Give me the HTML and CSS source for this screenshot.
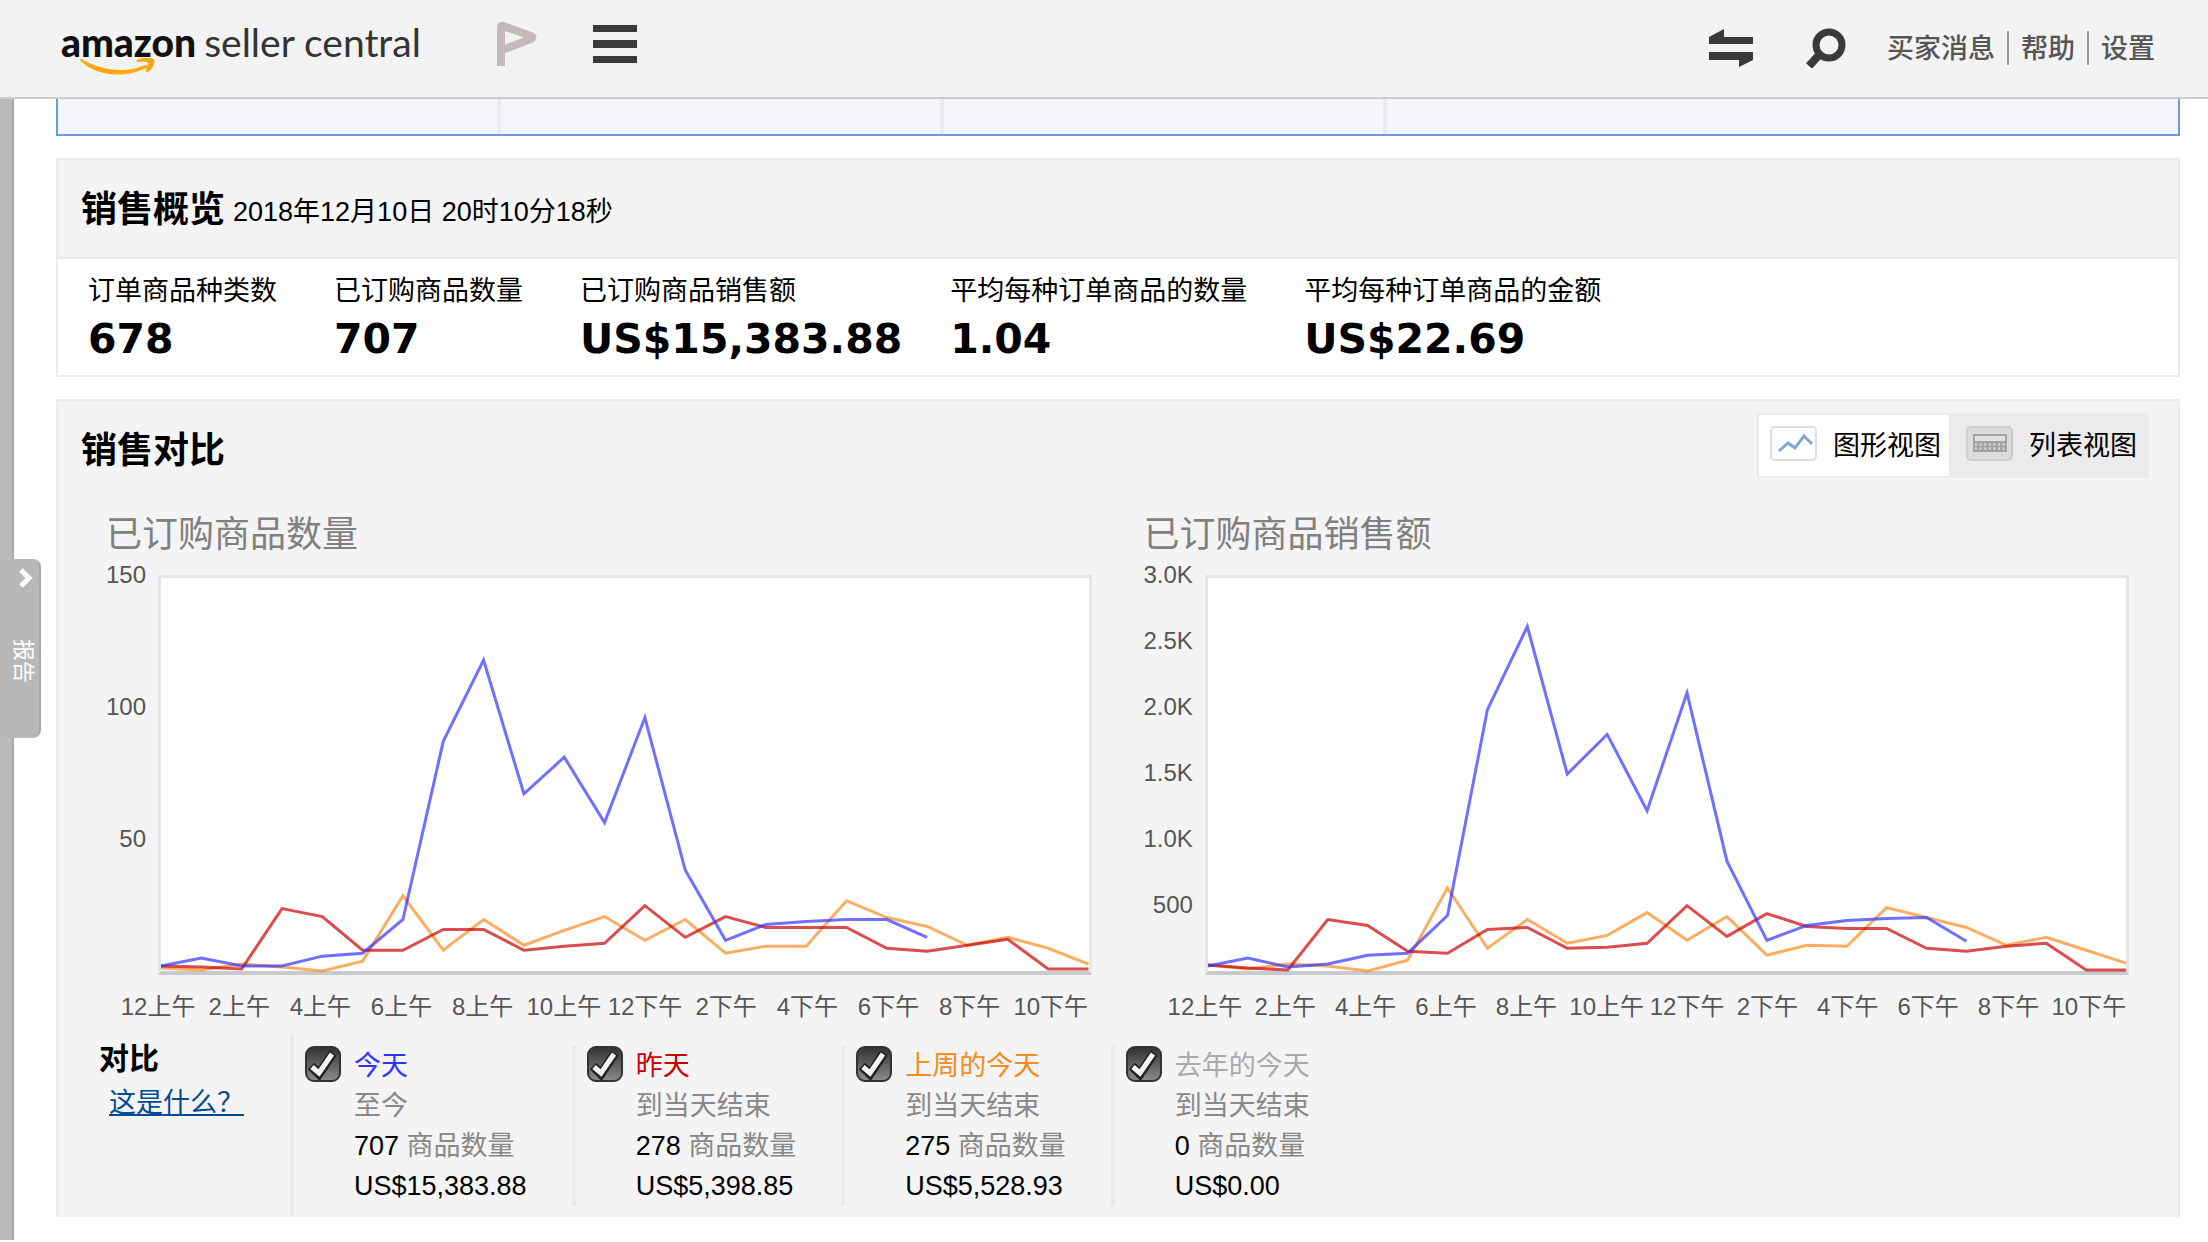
FILE: index.html
```
<!DOCTYPE html>
<html lang="zh-CN">
<head>
  <meta charset="utf-8">
  <title>Amazon Seller Central</title>

  <link rel="stylesheet" href="styles.css">
</head>
<body>

  <header class="topbar">
    <a class="logo" href="#">
      <span class="logo-bold">amazon</span>
      <span class="logo-light">seller central</span>
      <svg class="smile" viewBox="0 0 76 24" preserveAspectRatio="none">
        <path d="M1 1C20 17 46 21 66 9L68 12C46 28 16 25 0 3Z" fill="#ffa60c"/>
        <path d="M57 3C64 -1 70 0 74 2C74 9 72 15 67 19L66 17C68 12 69 8 68 5C65 4 61 4 57 5Z" fill="#ffa60c" stroke="#ffa60c"/>
      </svg>
    </a>
    <button class="icon-btn flag" type="button" aria-label="旗标">
      <svg width="40" height="46" viewBox="0 0 40 46">
        <path d="M4 45V6Q4 4 6 5L34 15Q37 16 34 18L5 29" fill="none" stroke="#c6b9b9" stroke-width="8"/>
      </svg>
    </button>
    <button class="icon-btn" type="button" aria-label="菜单">
      <svg width="44" height="38" viewBox="0 0 44 38">
        <path d="M0 0H44V7H0ZM0 15H44V23H0ZM0 31H44V38H0Z" fill="#3a3a3a"/>
      </svg>
    </button>

    <nav class="top-links">
      <button class="icon-btn" type="button" aria-label="切换">
        <svg width="44" height="38" viewBox="0 0 44 38">
          <path d="M0 8L15 0V8H44V15H0ZM0 23H44V31L30 38V31H0Z" fill="#3a3a3a"/>
        </svg>
      </button>
      <button class="icon-btn search" type="button" aria-label="搜索">
        <svg width="40" height="40" viewBox="0 0 40 40">
          <circle cx="23" cy="17" r="13" fill="none" stroke="#3a3a3a" stroke-width="7"/>
          <path d="M13 27L3 38" stroke="#3a3a3a" stroke-width="8"/>
        </svg>
      </button>
      <a href="#">买家消息</a>
      <a href="#">帮助</a>
      <a href="#">设置</a>
    </nav>
  </header>

  <div class="layout">
    <aside class="rail">
      <button class="rail-tab" type="button">
        <svg width="16" height="20" viewBox="0 0 16 20">
          <path d="M3 2L11 10L3 18" fill="none" stroke="#fff" stroke-width="5"/>
        </svg>
        <span>报告</span>
      </button>
    </aside>

    <main class="content">
      <div class="strip">
        <div></div>
        <div></div>
        <div></div>
        <div></div>
      </div>

      <section class="panel">
        <div class="panel-head">
          <h2>销售概览</h2>
          <span class="date">2018年12月10日 20时10分18秒</span>
        </div>
        <dl class="stats">
          <div><dt>订单商品种类数</dt><dd>678</dd></div>
          <div><dt>已订购商品数量</dt><dd>707</dd></div>
          <div><dt>已订购商品销售额</dt><dd>US$15,383.88</dd></div>
          <div><dt>平均每种订单商品的数量</dt><dd>1.04</dd></div>
          <div><dt>平均每种订单商品的金额</dt><dd>US$22.69</dd></div>
        </dl>
      </section>

      <section class="panel compare">
        <div class="compare-head">
          <h2>销售对比</h2>
          <div class="views">
            <button class="view active" type="button">
              <svg width="47" height="35" viewBox="0 0 47 35">
                <rect x="1" y="1" width="45" height="33" rx="4" fill="#fff" stroke="#dedede" stroke-width="2"/>
                <path d="M9 25L18 17L25 22L34 10L42 18" fill="none" stroke="#7ba9d8" stroke-width="3"/>
              </svg>
              图形视图
            </button>
            <button class="view" type="button">
              <svg width="47" height="35" viewBox="0 0 47 35">
                <rect x="1" y="1" width="45" height="33" rx="4" fill="#dcdcdc" stroke="#cdcdcd" stroke-width="2"/>
                <rect x="7" y="8" width="34" height="18" fill="#a3a3a3"/>
                <rect x="9" y="10" width="30" height="5" fill="#e2e2e2"/>
                <path d="M9 18.500H39M9 22.500H39" stroke="#e2e2e2" stroke-width="2" stroke-dasharray="2 2.600"/>
              </svg>
              列表视图
            </button>
          </div>
        </div>

        <div class="charts">
          <figure class="chart">
            <figcaption>已订购商品数量</figcaption>
            <div class="y-axis">
              <span>150</span><span>100</span><span>50</span><span></span>
            </div>
            <!-- 40 units per hour across, 397 units = full scale -->
            <svg class="plot" viewBox="0 0 920 397" preserveAspectRatio="none">
              <polyline class="line last-week" points="0,394 40,396 80,390 120,393 160,397 200,387 240,321 280,376 320,345 360,371 400,356 440,342 480,366 520,345 560,379 600,372 640,372 680,326 720,343 760,352 800,371 840,363 880,374 920,390"/>
              <polyline class="line yesterday" points="0,392 40,393 80,395 120,334 160,342 200,376 240,376 280,355 320,355 360,376 400,372 440,369 480,331 520,363 560,342 600,353 640,353 680,353 720,374 760,377 800,371 840,365 880,395 920,395"/>
              <polyline class="line today" points="0,392 40,384 80,392 120,392 160,382 200,379 240,345 280,165 320,83 360,218 400,181 440,247 480,141 520,295 560,366 600,350 640,347 680,345 720,345 760,363"/>
            </svg>
            <div class="x-axis">
              <span>12上午</span><span>2上午</span><span>4上午</span><span>6上午</span><span>8上午</span><span>10上午</span><span>12下午</span><span>2下午</span><span>4下午</span><span>6下午</span><span>8下午</span><span>10下午</span>
            </div>
          </figure>

          <figure class="chart">
            <figcaption>已订购商品销售额</figcaption>
            <div class="y-axis">
              <span>3.0K</span><span>2.5K</span><span>2.0K</span><span>1.5K</span><span>1.0K</span><span>500</span><span></span>
            </div>
            <svg class="plot" viewBox="0 0 920 397" preserveAspectRatio="none">
              <polyline class="line last-week" points="0,391 40,395 80,390 120,392 160,397 200,386 240,313 280,374 320,345 360,369 400,361 440,338 480,366 520,342 560,381 600,371 640,372 680,333 720,343 760,353 800,371 840,363 880,376 920,389"/>
              <polyline class="line yesterday" points="0,391 40,394 80,396 120,345 160,351 200,377 240,379 280,355 320,353 360,374 400,373 440,369 480,331 520,362 560,339 600,352 640,354 680,354 720,374 760,377 800,372 840,369 880,396 920,396"/>
              <polyline class="line today" points="0,392 40,384 80,393 120,390 160,381 200,379 240,341 280,133 320,49 360,198 400,158 440,235 480,116 520,286 560,366 600,351 640,346 680,344 720,343 760,367"/>
            </svg>
            <div class="x-axis">
              <span>12上午</span><span>2上午</span><span>4上午</span><span>6上午</span><span>8上午</span><span>10上午</span><span>12下午</span><span>2下午</span><span>4下午</span><span>6下午</span><span>8下午</span><span>10下午</span>
            </div>
          </figure>
        </div>

        <div class="legend">
          <div class="legend-title">
            <h3>对比</h3>
            <a href="#">这是什么？</a>
          </div>
          <div class="legend-item">
            <input type="checkbox" id="today" checked>
            <div>
              <label class="c-today" for="today">今天</label>
              <p class="muted">至今</p>
              <p>707 <span class="muted">商品数量</span></p>
              <p>US$15,383.88</p>
            </div>
          </div>
          <div class="legend-item">
            <input type="checkbox" id="yesterday" checked>
            <div>
              <label class="c-yesterday" for="yesterday">昨天</label>
              <p class="muted">到当天结束</p>
              <p>278 <span class="muted">商品数量</span></p>
              <p>US$5,398.85</p>
            </div>
          </div>
          <div class="legend-item">
            <input type="checkbox" id="last-week" checked>
            <div>
              <label class="c-last-week" for="last-week">上周的今天</label>
              <p class="muted">到当天结束</p>
              <p>275 <span class="muted">商品数量</span></p>
              <p>US$5,528.93</p>
            </div>
          </div>
          <div class="legend-item">
            <input type="checkbox" id="last-year" checked>
            <div>
              <label class="c-last-year" for="last-year">去年的今天</label>
              <p class="muted">到当天结束</p>
              <p>0 <span class="muted">商品数量</span></p>
              <p>US$0.00</p>
            </div>
          </div>
        </div>
      </section>
    </main>
  </div>

</body>
</html>
```
FILE: styles.css
```
* {
  box-sizing: border-box;
}

body {
  margin: 0;
  background-color: #ffffff;
  color: #000000;
  font-family: "Liberation Sans", "Noto Sans CJK SC", sans-serif;
  font-size: 27px;
  line-height: 40px;
}

h2, h3, p, dl, dd, figure {
  margin: 0;
}

button {
  border: 0;
  padding: 0;
  background: none;
  color: inherit;
  font: inherit;
  cursor: pointer;
}

svg {
  display: block;
}

h2 {
  font-size: 36px;
  line-height: 48px;
}

/* top bar */

.topbar {
  display: flex;
  align-items: flex-start;
  height: 99px;
  padding: 0 53px 0 61px;
  background-color: #f3f3f3;
  border-bottom: 2px solid #cccccc;
}

.logo {
  position: relative;
  display: flex;
  gap: 8px;
  width: 436px;
  padding-top: 18px;
  color: #111111;
  font-family: Lato, sans-serif;
  font-size: 39px;
  line-height: 48px;
  text-decoration: none;
  white-space: nowrap;
}

.logo-bold {
  font-weight: 900;
}

.logo-light {
  color: #333333;
}

.smile {
  position: absolute;
  left: 19px;
  top: 58px;
  width: 76px;
  height: 18px;
}

.icon-btn {
  margin-top: 25px;
}

.icon-btn.flag {
  margin: 21px 56px 0 0;
}

.top-links {
  display: flex;
  align-items: center;
  margin-left: auto;
  padding-top: 28px;
}

.top-links .icon-btn {
  margin: 0 53px 0 0;
}

.top-links .icon-btn.search {
  margin-right: 41px;
}

.top-links a {
  padding-top: 2px;
  color: #555555;
  font-weight: 500;
  line-height: 32px;
  text-decoration: none;
}

.top-links a + a {
  margin-left: 12px;
  padding-left: 12px;
  border-left: 2px solid #999999;
}

/* page */

.layout {
  display: flex;
}

.rail {
  position: relative;
  width: 14px;
  background-color: #bababa;
  border-right: 2px solid #aaaaaa;
}

.rail-tab {
  position: absolute;
  left: 0;
  top: 460px;
  display: flex;
  flex-direction: column;
  align-items: flex-end;
  gap: 51px;
  width: 41px;
  height: 179px;
  padding: 9px 5px 0 0;
  background-color: #b8b8b8;
  border-radius: 0 8px 8px 0;
  border-right: 2px solid #aaaaaa;
  color: #ffffff;
}

.rail-tab span {
  font-size: 22px;
  line-height: 22px;
  writing-mode: vertical-rl;
  text-orientation: sideways;
}

.content {
  flex: 1;
  padding: 0 28px 23px 42px;
}

.strip {
  display: grid;
  grid-template-columns: 443px 443px 443px 1fr;
  height: 37px;
  margin-bottom: 22px;
  background-color: #f4f6fb;
  border: 2px solid #6b9fd4;
  border-top: 0;
}

.strip div + div {
  box-shadow: -4px 0 0 #ebebeb;
}

.panel {
  margin-bottom: 22px;
  border: 2px solid #ebebeb;
}

.panel-head {
  display: flex;
  align-items: center;
  gap: 8px;
  height: 99px;
  padding: 2px 23px 0;
  background-color: #f4f4f4;
  border-bottom: 2px solid #ebebeb;
}

.date {
  padding-top: 4px;
}

.stats {
  display: flex;
  gap: 48px;
  padding: 12px 30px 8px;
}

.stats dt {
  padding-right: 9px;
}

.stats dd {
  font-family: "DejaVu Sans", sans-serif;
  font-size: 41px;
  font-weight: bold;
  line-height: 56px;
}

/* comparison */

.compare {
  margin-bottom: 0;
  background-color: #f4f4f4;
  border-bottom: 0;
}

.compare-head {
  display: flex;
  justify-content: space-between;
  padding: 12px 29px 0 23px;
}

.compare-head h2 {
  padding-top: 14px;
}

.views {
  display: flex;
}

.view {
  display: flex;
  align-items: center;
  gap: 16px;
  height: 65px;
  padding: 0 10px 0 15px;
  background-color: #ebebeb;
  border: 2px solid #ebebeb;
}

.view.active {
  padding: 0 8px 0 11px;
  background-color: #ffffff;
  border-right: 0;
}

.view svg {
  margin-bottom: 5px;
}

.charts {
  display: grid;
  grid-template-columns: 1fr 1fr;
  gap: 52px;
  padding: 33px 49px 12px 48px;
}

.chart {
  display: grid;
  grid-template-columns: auto 1fr;
  column-gap: 12px;
}

.chart figcaption {
  grid-column: 1 / 3;
  margin-bottom: 16px;
  color: #808080;
  font-size: 36px;
  line-height: 48px;
}

.plot {
  width: 100%;
  height: 400px;
  background-color: #ffffff;
  border: 3px solid #e2e7ea;
  border-bottom: 4px solid #c8cbcd;
  overflow: visible;
}

.line {
  fill: none;
  stroke-width: 3;
  stroke-opacity: 0.7;
  vector-effect: non-scaling-stroke;
}

.line.today { stroke: #3333ff; }
.line.yesterday { stroke: #cc0000; }
.line.last-week { stroke: #f68b1f; }

.y-axis,
.x-axis {
  display: flex;
  justify-content: space-between;
  color: #555555;
  font-size: 24px;
  line-height: 32px;
}

.y-axis {
  flex-direction: column;
  padding-bottom: 4px;
  text-align: right;
}

/* zero-size boxes keep each label centred on its tick */
.y-axis span {
  display: flex;
  align-items: center;
  justify-content: flex-end;
  height: 0;
}

.x-axis {
  grid-column: 2;
  margin: 16px calc(100% / 23) 0 0;
  white-space: nowrap;
}

.x-axis span {
  display: flex;
  justify-content: center;
  width: 0;
}

.legend {
  display: flex;
}

.legend-title {
  width: 236px;
  height: 182px;
  padding-left: 41px;
  border-right: 4px solid #ebebeb;
}

.legend-title h3 {
  font-size: 30px;
  line-height: 48px;
}

.legend-title a {
  margin-left: 10px;
  color: #004b91;
}

.legend-item {
  display: flex;
  gap: 13px;
  height: 160px;
  margin-top: 11px;
  padding: 0 45px 0 11px;
}

.legend-item + .legend-item {
  border-left: 4px solid #ebebeb;
}

.legend-item label {
  display: block;
}

.legend-item input {
  appearance: none;
  flex: none;
  width: 36px;
  height: 36px;
  margin: 0;
  border: 2px solid #333333;
  border-radius: 9px;
  background: url("data:image/svg+xml,%3Csvg xmlns='http://www.w3.org/2000/svg' viewBox='0 0 32 32' fill='none'%3E%3Cpath d='M4 18L12 26L26 5' stroke='%23222' stroke-width='9'/%3E%3Cpath d='M5 19L12 25L25 6' stroke='%23f4f4f4' stroke-width='5'/%3E%3C/svg%3E"), linear-gradient(#333333, #8a8a8a);
}

.muted { color: #888888; }
.c-today { color: #3333ff; }
.c-yesterday { color: #cc0000; }
.c-last-week { color: #f68b1f; }
.c-last-year { color: #aaaaaa; }
```
